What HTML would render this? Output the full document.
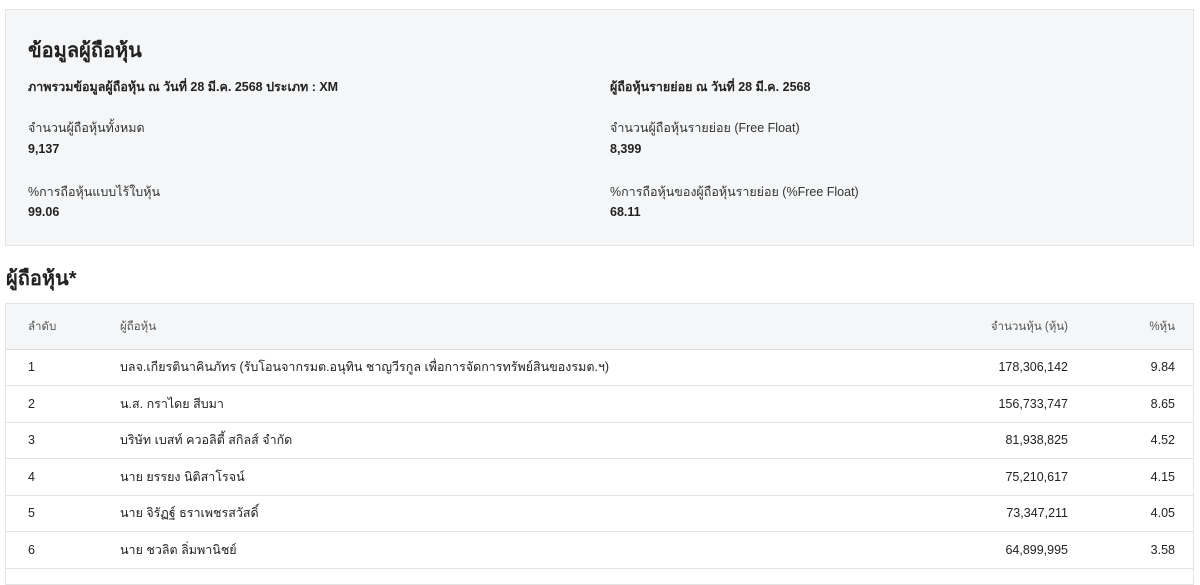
<!DOCTYPE html>
<html><head><meta charset="utf-8"><style>
body{margin:0;width:1200px;height:575px;overflow:hidden;background:#fff;font-family:"Liberation Sans","Noto Sans CJK SC",sans-serif;color:#222;}
.box{position:absolute;left:5px;top:9px;width:1187px;height:235px;background:#f5f6f7;border:1px solid #e3e3e3;}
.t{position:absolute;white-space:nowrap;}
.h1{font-size:20px;font-weight:bold;}
.sb{font-size:12.5px;font-weight:bold;}
.lb{font-size:12.5px;color:#333;}
.v{font-size:12.5px;font-weight:bold;}
.tbl{position:absolute;left:5px;top:303px;width:1187px;height:280px;border:1px solid #e3e3e3;}
.hd{position:absolute;left:0;top:0;width:100%;height:45px;background:#f5f6f7;border-bottom:1px solid #e0e0e0;}
.row{position:absolute;left:0;width:100%;height:36px;border-bottom:1px solid #e3e3e3;font-size:12.5px;}
.row span,.hd span{position:absolute;top:50%;transform:translateY(-50%);white-space:nowrap;}
.hd span{font-size:11.5px;color:#555;}
.r1{right:125px;}.r2{right:18px;}
</style></head><body>
<div class="box"></div>
<div class="t h1" style="left:28px;top:34px">ข้อมูลผู้ถือหุ้น</div>
<div class="t sb" style="left:28px;top:77px">ภาพรวมข้อมูลผู้ถือหุ้น ณ วันที่ 28 มี.ค. 2568 ประเภท : XM</div>
<div class="t sb" style="left:610px;top:77px">ผู้ถือหุ้นรายย่อย ณ วันที่ 28 มี.ค. 2568</div>
<div class="t lb" style="left:28px;top:118px">จำนวนผู้ถือหุ้นทั้งหมด</div>
<div class="t v" style="left:28px;top:142px">9,137</div>
<div class="t lb" style="left:610px;top:118px">จำนวนผู้ถือหุ้นรายย่อย (Free Float)</div>
<div class="t v" style="left:610px;top:142px">8,399</div>
<div class="t lb" style="left:28px;top:182px">%การถือหุ้นแบบไร้ใบหุ้น</div>
<div class="t v" style="left:28px;top:205px">99.06</div>
<div class="t lb" style="left:610px;top:182px">%การถือหุ้นของผู้ถือหุ้นรายย่อย (%Free Float)</div>
<div class="t v" style="left:610px;top:205px">68.11</div>
<div class="t h1" style="left:6px;top:262px">ผู้ถือหุ้น*</div>
<div class="tbl">
<div class="hd"><span style="left:22px">ลำดับ</span><span style="left:114px">ผู้ถือหุ้น</span><span class="r1">จำนวนหุ้น (หุ้น)</span><span class="r2">%หุ้น</span></div>
<div class="row" style="top:45px"><span style="left:22px">1</span><span style="left:114px">บลจ.เกียรตินาคินภัทร (รับโอนจากรมต.อนุทิน ชาญวีรกูล เพื่อการจัดการทรัพย์สินของรมต.ฯ)</span><span class="r1">178,306,142</span><span class="r2">9.84</span></div>
<div class="row" style="top:82px"><span style="left:22px">2</span><span style="left:114px">น.ส. กราไดย สีบมา</span><span class="r1">156,733,747</span><span class="r2">8.65</span></div>
<div class="row" style="top:118px"><span style="left:22px">3</span><span style="left:114px">บริษัท เบสท์ ควอลิตี้ สกิลส์ จำกัด</span><span class="r1">81,938,825</span><span class="r2">4.52</span></div>
<div class="row" style="top:155px"><span style="left:22px">4</span><span style="left:114px">นาย ยรรยง นิติสาโรจน์</span><span class="r1">75,210,617</span><span class="r2">4.15</span></div>
<div class="row" style="top:191px"><span style="left:22px">5</span><span style="left:114px">นาย จิรัฏฐ์ ธราเพชรสวัสดิ์</span><span class="r1">73,347,211</span><span class="r2">4.05</span></div>
<div class="row" style="top:228px"><span style="left:22px">6</span><span style="left:114px">นาย ชวลิต ลิ่มพานิชย์</span><span class="r1">64,899,995</span><span class="r2">3.58</span></div>
</div>
</body></html>
